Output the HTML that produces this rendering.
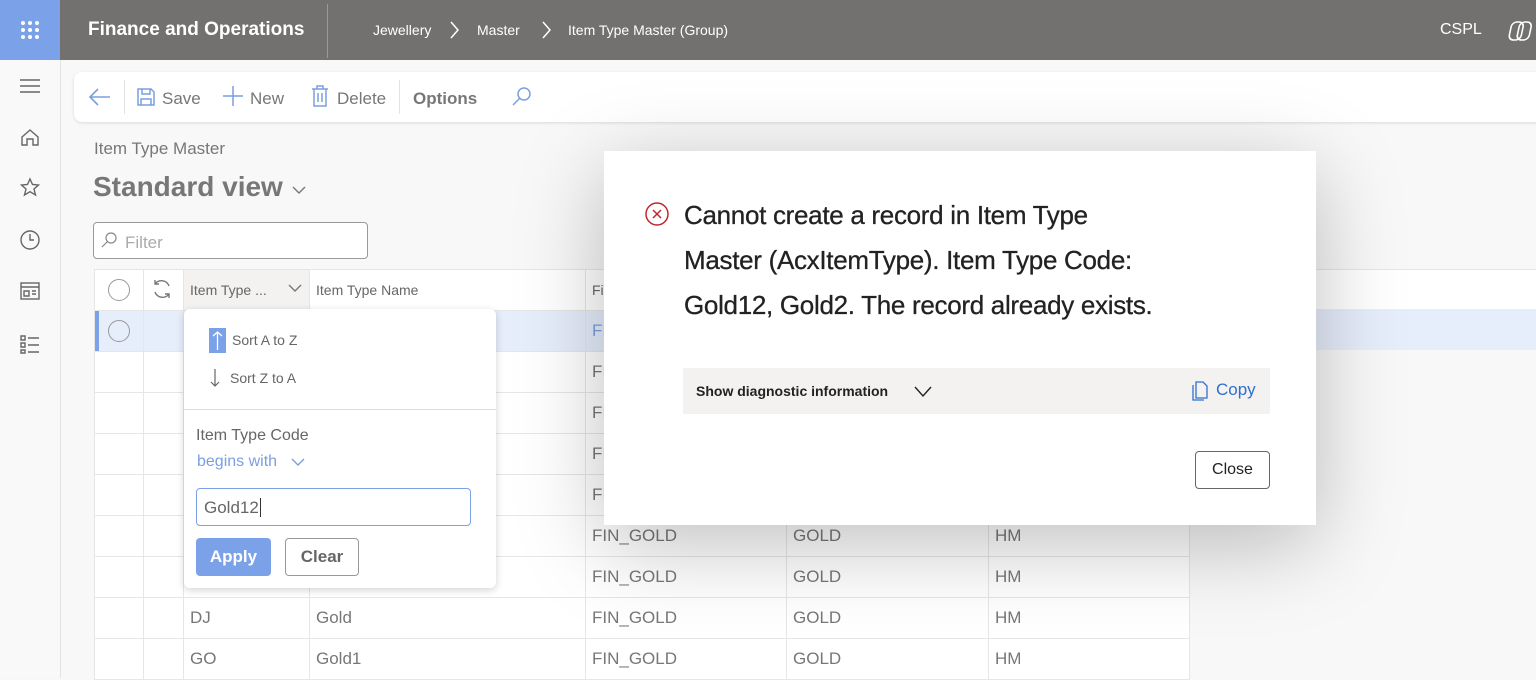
<!DOCTYPE html>
<html><head><meta charset="utf-8"><style>
*{box-sizing:border-box;margin:0;padding:0}
body{width:1536px;height:678px;overflow:hidden;background:#f8f8f8;font-family:"Liberation Sans",sans-serif;color:#555;position:relative}
.abs{position:absolute}
.hdr{left:0;top:0;width:1536px;height:60px;background:#727170}
.grid-btn{left:0;top:0;width:60px;height:60px;background:#7ba1e9}
.side{left:0;top:60px;width:61px;height:618px;background:#f9f9f9;border-right:1px solid #e3e3e3}
.tb{left:74px;top:72px;width:1470px;height:50px;background:#fff;border-radius:8px;box-shadow:0 1px 3px rgba(0,0,0,.12)}
.tb span{position:absolute;top:17px;font-size:17px;color:#777}
table{position:absolute;left:94px;top:269px;border-collapse:collapse;font-size:17px;color:#777}
td{height:41px;border:1px solid #e6e6e6;padding:0 6px;background:#fff;white-space:nowrap}
.hrow td{font-size:14px;color:#666}
.sel td{background:#e6edfb}
.circ{width:22px;height:22px;border:1px solid #999;border-radius:50%;margin:auto}
.dd{left:184px;top:309px;width:312px;height:279px;background:#fff;border-radius:6px;box-shadow:0 2px 8px rgba(0,0,0,.18)}
.dlg{left:604px;top:151px;width:712px;height:374px;background:#fff;box-shadow:0 20px 80px rgba(0,0,0,.25)}
</style></head><body>
<div class="abs hdr"></div>
<div class="abs grid-btn"><svg width="60" height="60"><g fill="#fff"><circle cx="23" cy="23" r="2"/><circle cx="30" cy="23" r="2"/><circle cx="37" cy="23" r="2"/><circle cx="23" cy="30" r="2"/><circle cx="30" cy="30" r="2"/><circle cx="37" cy="30" r="2"/><circle cx="23" cy="37" r="2"/><circle cx="30" cy="37" r="2"/><circle cx="37" cy="37" r="2"/></g></svg></div>
<div class="abs" style="left:88px;top:19px;color:#fff;font-size:19px;font-weight:bold">Finance and Operations</div>
<div class="abs" style="left:327px;top:4px;width:1px;height:54px;background:#999"></div>
<div class="abs" style="left:373px;top:22px;color:#fff;font-size:14px">Jewellery</div>
<svg class="abs" style="left:448px;top:20px" width="12" height="20"><path d="M3 2l7 8-7 8" stroke="#fff" stroke-width="1.5" fill="none"/></svg>
<div class="abs" style="left:477px;top:22px;color:#fff;font-size:14px">Master</div>
<svg class="abs" style="left:540px;top:20px" width="12" height="20"><path d="M3 2l7 8-7 8" stroke="#fff" stroke-width="1.5" fill="none"/></svg>
<div class="abs" style="left:568px;top:22px;color:#fff;font-size:14px">Item Type Master (Group)</div>
<div class="abs" style="left:1440px;top:21px;color:#fff;font-size:16px">CSPL</div>
<svg class="abs" style="left:1507px;top:18px" width="28" height="26"><rect x="6" y="4" width="12" height="18" rx="5" stroke="#fff" stroke-width="1.6" fill="none" transform="skewX(-12)"/><rect x="14" y="4" width="12" height="18" rx="5" stroke="#fff" stroke-width="1.6" fill="none" transform="skewX(-12)"/></svg>
<div class="abs side"></div>
<svg class="abs" style="left:0;top:60px" width="60" height="300" fill="none" stroke="#666" stroke-width="1.4">
<path d="M20 20h20M20 26h20M20 32h20"/>
<path d="M22 77l8-7 8 7v8h-5v-6h-6v6h-5z"/>
<path d="M30 119l2.5 5.5 6 .5-4.5 4 1.5 6-5.5-3.3-5.5 3.3 1.5-6-4.5-4 6-.5z"/>
<circle cx="30" cy="180" r="9"/><path d="M30 174v6h4"/>
<rect x="21" y="223" width="18" height="16"/><path d="M21 227h18M24 231h5v5h-5zM32 231h4M32 234h4"/>
<path d="M21 276h4v4h-4zM21 283h4v4h-4zM21 290h4v3h-4zM28 278h11M28 285h11M28 292h11"/>
</svg>
<div class="abs tb">
<svg class="abs" style="left:14px;top:14px" width="24" height="22"><path d="M22 11H3M10 3l-8 8 8 8" stroke="#7a9fe0" stroke-width="1.6" fill="none"/></svg>
<div class="abs" style="left:50px;top:8px;width:1px;height:34px;background:#e3e3e3"></div>
<svg class="abs" style="left:62px;top:15px" width="20" height="20"><path d="M2 2h13l3 3v13H2z M6 2v5h8V2 M5 18v-6h10v6" stroke="#7a9fe0" stroke-width="1.5" fill="none"/></svg>
<span style="left:88px">Save</span>
<svg class="abs" style="left:148px;top:13px" width="22" height="22"><path d="M11 1v20M1 11h20" stroke="#7a9fe0" stroke-width="1.5"/></svg>
<span style="left:176px">New</span>
<svg class="abs" style="left:236px;top:13px" width="20" height="22"><path d="M2 4h16M7 4V1h6v3M4 4v17h12V4M8 8v9M12 8v9" stroke="#7a9fe0" stroke-width="1.5" fill="none"/></svg>
<span style="left:263px">Delete</span>
<div class="abs" style="left:325px;top:8px;width:1px;height:34px;background:#e3e3e3"></div>
<span style="left:339px;font-weight:bold;color:#777">Options</span>
<svg class="abs" style="left:437px;top:14px" width="22" height="22"><circle cx="13" cy="8" r="6" stroke="#7a9fe0" stroke-width="1.5" fill="none"/><path d="M9 12l-7 7" stroke="#7a9fe0" stroke-width="1.5"/></svg>
</div>
<div class="abs" style="left:94px;top:139px;font-size:17px;color:#777">Item Type Master</div>
<div class="abs" style="left:93px;top:171px;font-size:28px;font-weight:bold;color:#777">Standard view</div>
<svg class="abs" style="left:291px;top:184px" width="16" height="12"><path d="M2 3l6 6 6-6" stroke="#777" stroke-width="1.4" fill="none"/></svg>
<div class="abs" style="left:93px;top:222px;width:275px;height:37px;border:1px solid #999;border-radius:4px;background:#fff"></div>
<svg class="abs" style="left:100px;top:231px" width="18" height="18"><circle cx="11" cy="7" r="5" stroke="#888" stroke-width="1.2" fill="none"/><path d="M7 11l-5 5" stroke="#888" stroke-width="1.2"/></svg>
<div class="abs" style="left:125px;top:233px;font-size:17px;color:#aaa">Filter</div>
<div class="abs" style="left:94px;top:269px;width:1442px;height:41px;background:#fff;border-top:1px solid #e6e6e6"></div>
<table>
<tr class="hrow"><td style="width:49px"><div class="circ"></div></td><td style="width:40px"><svg width="24" height="24"><path d="M19 9a8 8 0 0 0-14-2M5 15a8 8 0 0 0 14 2M5 3v4h4M19 21v-4h-4" stroke="#777" stroke-width="1.4" fill="none"/></svg></td><td style="width:126px;background:#f3f2f1">Item Type ... <svg style="float:right" width="16" height="12"><path d="M2 3l6 6 6-6" stroke="#777" stroke-width="1.4" fill="none"/></svg></td><td style="width:276px">Item Type Name</td><td style="width:201px">Fi</td><td style="width:202px"></td><td style="width:201px"></td></tr>
<tr class="sel"><td style="box-shadow:inset 4px 0 #7ba1e9"><div class="circ"></div></td><td></td><td></td><td></td><td style="color:#7a9fe0">FIN_GOLD</td><td>GOLD</td><td>HM</td></tr>
<tr><td></td><td></td><td></td><td></td><td>FIN_GOLD</td><td>GOLD</td><td>HM</td></tr>
<tr><td></td><td></td><td></td><td></td><td>FIN_GOLD</td><td>GOLD</td><td>HM</td></tr>
<tr><td></td><td></td><td></td><td></td><td>FIN_GOLD</td><td>GOLD</td><td>HM</td></tr>
<tr><td></td><td></td><td></td><td></td><td>FIN_GOLD</td><td>GOLD</td><td>HM</td></tr>
<tr><td></td><td></td><td></td><td></td><td>FIN_GOLD</td><td>GOLD</td><td>HM</td></tr>
<tr><td></td><td></td><td></td><td></td><td>FIN_GOLD</td><td>GOLD</td><td>HM</td></tr>
<tr><td></td><td></td><td>DJ</td><td>Gold</td><td>FIN_GOLD</td><td>GOLD</td><td>HM</td></tr>
<tr><td></td><td></td><td>GO</td><td>Gold1</td><td>FIN_GOLD</td><td>GOLD</td><td>HM</td></tr>
</table>
<div class="abs" style="left:1189px;top:309px;width:347px;height:41px;background:#e6edfb"></div>
<div class="abs dd">
<div class="abs" style="left:25px;top:19px;width:17px;height:25px;background:#7ba1e9"></div>
<svg class="abs" style="left:25px;top:21px" width="17" height="22"><path d="M8.5 20V2M4 6l4.5-4 4.5 4" stroke="#fff" stroke-width="1.3" fill="none"/></svg>
<div class="abs" style="left:48px;top:23px;font-size:14px;color:#666">Sort A to Z</div>
<svg class="abs" style="left:25px;top:58px" width="12" height="22"><path d="M6 2v17M2 15l4 4 4-4" stroke="#666" stroke-width="1.2" fill="none"/></svg>
<div class="abs" style="left:46px;top:61px;font-size:14px;color:#666">Sort Z to A</div>
<div class="abs" style="left:0;top:100px;width:312px;height:1px;background:#ddd"></div>
<div class="abs" style="left:12px;top:118px;font-size:16px;color:#666">Item Type Code</div>
<div class="abs" style="left:13px;top:144px;font-size:16px;color:#7a9fe0">begins with</div>
<svg class="abs" style="left:106px;top:147px" width="16" height="12"><path d="M2 3l6 6 6-6" stroke="#7a9fe0" stroke-width="1.4" fill="none"/></svg>
<div class="abs" style="left:12px;top:179px;width:275px;height:38px;border:1px solid #7ba1e9;border-radius:4px"></div>
<div class="abs" style="left:20px;top:189px;font-size:17px;color:#666">Gold12<span style="border-left:1px solid #333;margin-left:1px"></span></div>
<div class="abs" style="left:12px;top:229px;width:75px;height:38px;background:#7ba1e9;border-radius:4px;color:#fff;font-weight:bold;font-size:17px;text-align:center;line-height:38px">Apply</div>
<div class="abs" style="left:101px;top:229px;width:74px;height:38px;border:1px solid #999;border-radius:4px;color:#666;font-size:17px;text-align:center;line-height:36px;font-weight:bold">Clear</div>
</div>
<div class="abs dlg">
<svg class="abs" style="left:40px;top:50px" width="26" height="26"><circle cx="13" cy="13" r="11" stroke="#c0262d" stroke-width="1.5" fill="none"/><path d="M9 9l8 8M17 9l-8 8" stroke="#c0262d" stroke-width="1.5"/></svg>
<div class="abs" style="left:80px;top:42px;width:620px;font-size:26px;line-height:45px;color:#222;white-space:nowrap;letter-spacing:-0.3px;-webkit-text-stroke:0.3px #222">Cannot create a record in Item Type<br>Master (AcxItemType). Item Type Code:<br>Gold12, Gold2. The record already exists.</div>
<div class="abs" style="left:79px;top:217px;width:587px;height:46px;background:#f3f2f1"></div>
<div class="abs" style="left:92px;top:232px;font-size:14px;font-weight:bold;color:#222">Show diagnostic information</div>
<svg class="abs" style="left:309px;top:234px" width="20" height="14"><path d="M2 2l8 9 8-9" stroke="#222" stroke-width="1.4" fill="none"/></svg>
<svg class="abs" style="left:587px;top:228px" width="20" height="22"><path d="M5 3h7l4 4v12H5z M2 6v15h11" stroke="#2f6fd0" stroke-width="1.3" fill="none"/></svg>
<div class="abs" style="left:612px;top:229px;font-size:17px;color:#2f6fd0">Copy</div>
<div class="abs" style="left:591px;top:300px;width:75px;height:38px;border:1px solid #666;border-radius:4px;font-size:16px;text-align:center;line-height:36px;color:#222">Close</div>
</div>
</body></html>
